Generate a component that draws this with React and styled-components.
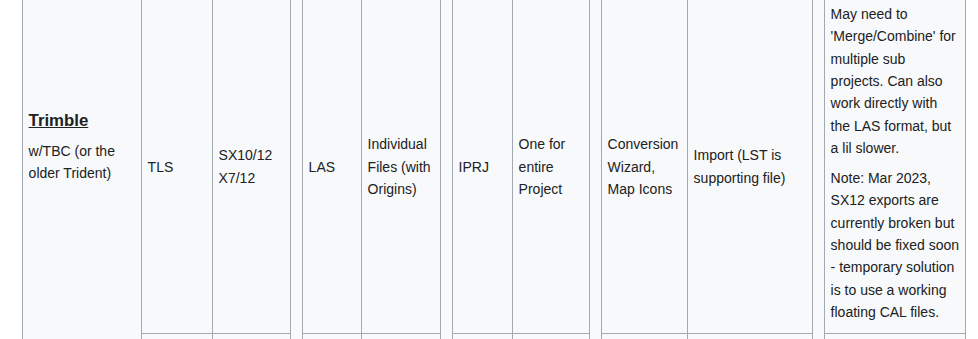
import React from "react";
import styled, { createGlobalStyle } from "styled-components";

const Global = createGlobalStyle`
  html, body { margin: 0; padding: 0; background: #ffffff; }
  body { font-family: "Liberation Sans", Arial, sans-serif; color: #202122; }
`;

const Viewport = styled.div`
  height: 339px;
  overflow: hidden;
`;

const Table = styled.table`
  margin: -69px 0 0 22px;
  border-collapse: collapse;
  table-layout: fixed;
  width: 944px;
  background: #f8f9fa;
  border: 1px solid #a2a9b1;
  font-size: 14px;
  line-height: 1.6;
  color: #202122;
`;

const Row = styled.tr`
  height: ${(p) => (p.$h ? `${p.$h}px` : "auto")};
`;

const Cell = styled.td`
  border: 1px solid #a2a9b1;
  padding: 2.8px 5.6px;
  vertical-align: middle;
  text-align: left;
`;

const Gap = styled.td`
  border: 1px solid #a2a9b1;
  padding: 0;
`;

const Brand = styled.div`
  font-size: 16.8px;
  font-weight: bold;
  text-decoration: underline;
  margin: 0 0 5.4px;
`;

const Para = styled.p`
  margin: ${(p) => (p.$top ? `${p.$top}px` : "5.6px")} 0 7px;
`;

const widths = [119, 71, 78, 12, 59, 79, 12, 60, 77, 12, 86, 125, 12, 141];

const mainCells = [
  "TLS",
  "SX10/12 X7/12",
  "LAS",
  "Individual Files (with Origins)",
  "IPRJ",
  "One for entire Project",
  "Conversion Wizard, Map Icons",
  "Import (LST is supporting file)",
];

function FillerRow({ h }) {
  return (
    <Row $h={h}>
      {Array.from({ length: 9 }).map((_, i) => (
        <Cell key={i} />
      ))}
    </Row>
  );
}

export default function App() {
  return (
    <>
      <Global />
      <Viewport>
        <Table>
          <colgroup>
            {widths.map((w, i) => (
              <col key={i} style={{ width: w }} />
            ))}
          </colgroup>
          <tbody>
            <Row $h={68}>
              <Cell rowSpan={3}>
                <Brand>Trimble</Brand>
                <Para>w/TBC (or the older Trident)</Para>
              </Cell>
              <Cell />
              <Cell />
              <Gap rowSpan={3} />
              <Cell />
              <Cell />
              <Gap rowSpan={3} />
              <Cell />
              <Cell />
              <Gap rowSpan={3} />
              <Cell />
              <Cell />
              <Gap rowSpan={3} />
              <Cell />
            </Row>
            <Row>
              {mainCells.map((c, i) => (
                <Cell key={i}>{c}</Cell>
              ))}
              <Cell>
                May need to 'Merge/Combine' for multiple sub projects. Can also
                work directly with the LAS format, but a lil slower.
                <Para $top={7.4}>
                  Note: Mar 2023, SX12 exports are currently broken but should be
                  fixed soon - temporary solution is to use a working floating CAL
                  files.
                </Para>
              </Cell>
            </Row>
            <FillerRow h={34} />
          </tbody>
        </Table>
      </Viewport>
    </>
  );
}
